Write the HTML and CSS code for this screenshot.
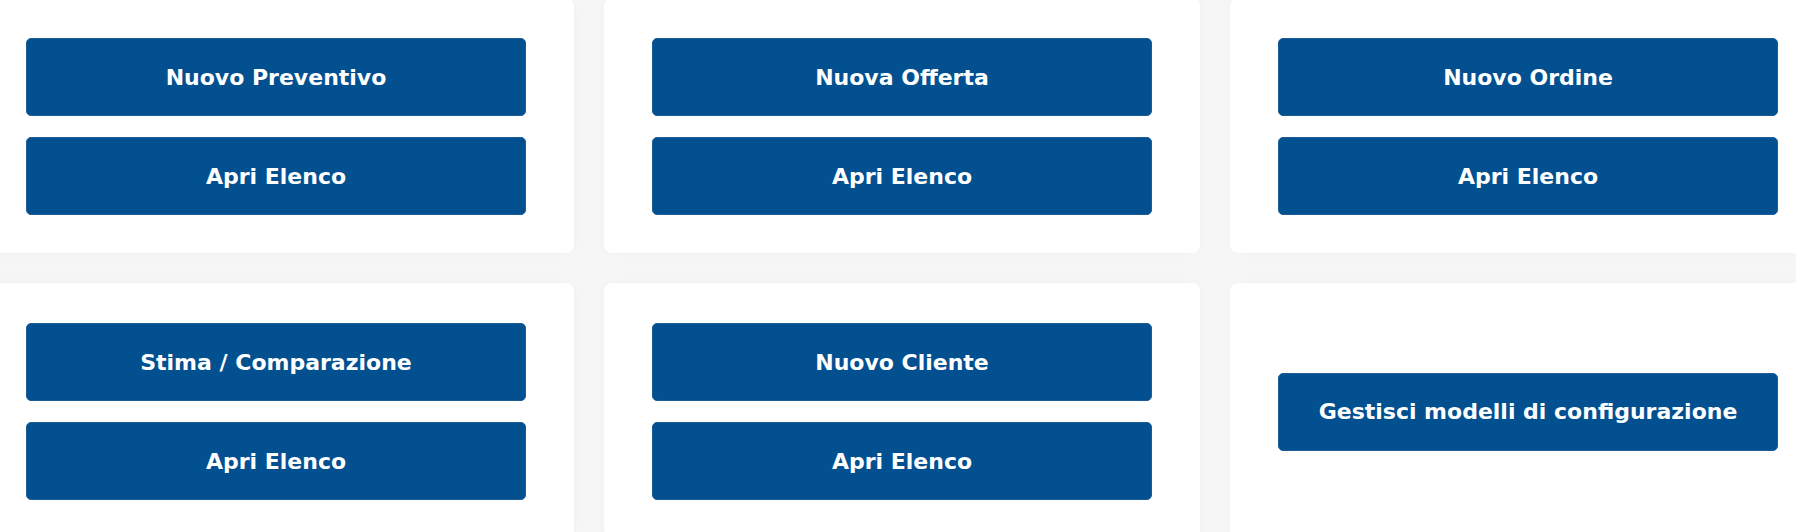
FILE: index.html
```html
<!DOCTYPE html>
<html lang="it">
<head>
  <meta charset="UTF-8">
  <meta name="viewport" content="width=device-width, initial-scale=1.0">
  <title>Dashboard</title>
  <link rel="stylesheet" href="styles.css">
</head>
<body>
  <main class="grid">
    <div class="card">
      <button type="button" class="btn">Nuovo Preventivo</button>
      <button type="button" class="btn">Apri Elenco</button>
    </div>
    <div class="card">
      <button type="button" class="btn">Nuova Offerta</button>
      <button type="button" class="btn">Apri Elenco</button>
    </div>
    <div class="card">
      <button type="button" class="btn">Nuovo Ordine</button>
      <button type="button" class="btn">Apri Elenco</button>
    </div>
    <div class="card">
      <button type="button" class="btn">Stima / Comparazione</button>
      <button type="button" class="btn">Apri Elenco</button>
    </div>
    <div class="card">
      <button type="button" class="btn">Nuovo Cliente</button>
      <button type="button" class="btn">Apri Elenco</button>
    </div>
    <div class="card">
      <button type="button" class="btn">Gestisci modelli di configurazione</button>
    </div>
  </main>
</body>
</html>
```

FILE: styles.css
```css
body{
  margin: 0;
  background-color: #f6f6f6;
  font-family: "DejaVu Sans", "Open Sans", sans-serif;
  overflow: hidden;
}
.grid{
  display: grid;
  grid-template-columns: repeat(3, 596px);
  column-gap: 30px;
  row-gap: 30px;
  margin: -2px 0 0 -22px;
}
.card{
  background-color: #fff;
  border-radius: 8px;
  box-shadow: 0 0 12px rgba(0, 0, 0, .025);
  padding: 40px 48px 38px;
  display: flex;
  flex-direction: column;
  justify-content: center;
  gap: 21px;
  min-height: 177px;
}
.btn{
  height: 78px;
  width: 100%;
  border: 1px solid #1a5d97;
  border-radius: 5px;
  background-color: #035091;
  color: #fff;
  font-family: inherit;
  font-size: 22px;
  font-weight: bold;
  cursor: pointer;
}
```
